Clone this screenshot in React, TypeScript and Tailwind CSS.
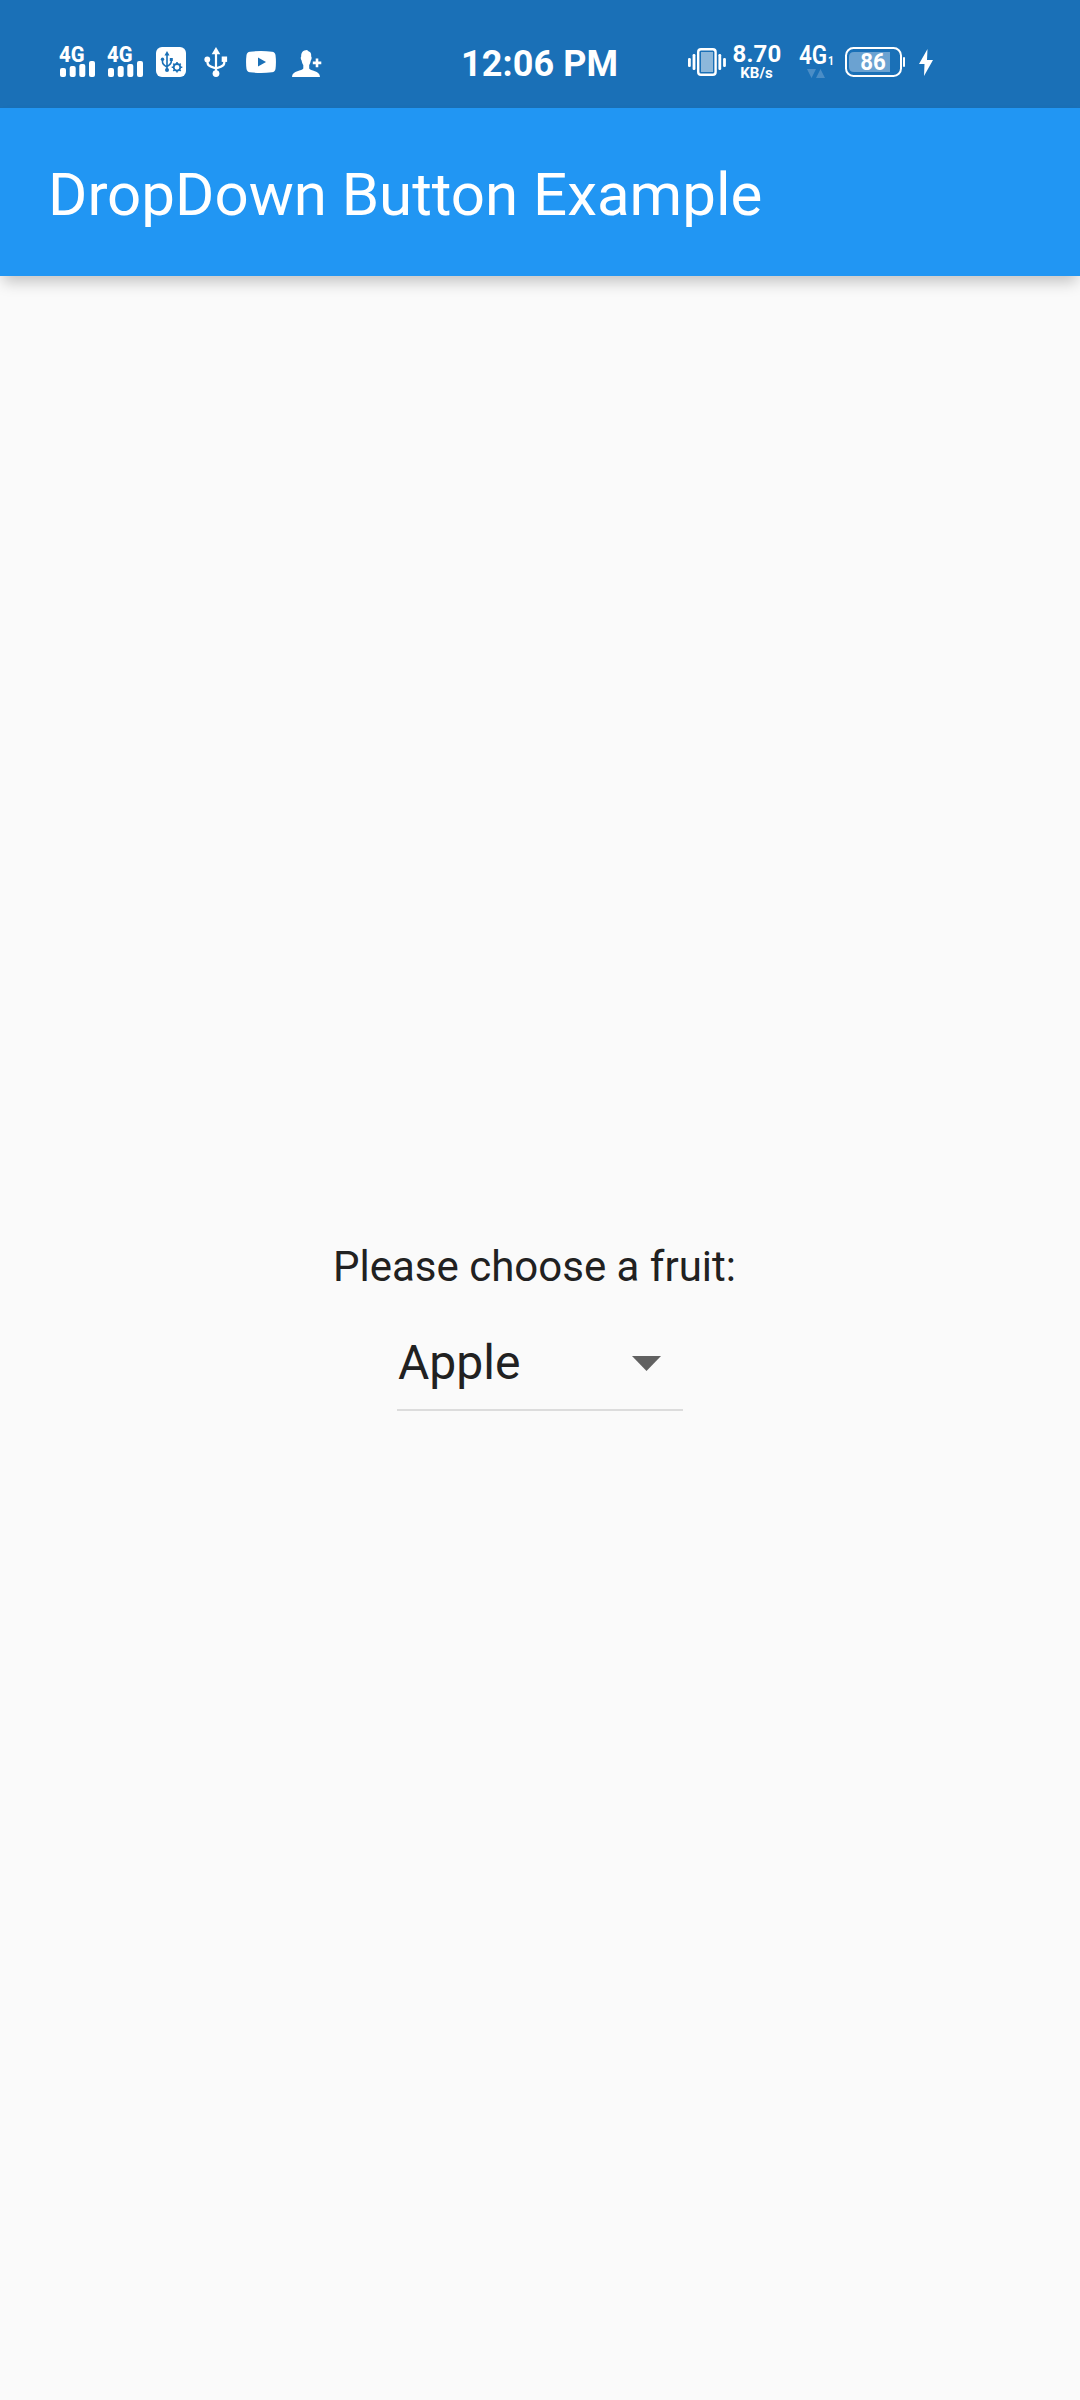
import React from "react";

function Signal() {
  return (
    <div className="relative h-[30px] w-[35px]">
      <span className="absolute -left-px top-0 h-[15px] origin-left scale-x-[0.92] text-[22px] leading-[15px] font-extrabold">
        4G
      </span>
      <svg className="block" width="35" height="30" viewBox="0 0 35 30" fill="currentColor">
        <rect x="0" y="21" width="6" height="9" rx="2" />
        <rect x="9.7" y="19" width="6" height="11" rx="2" />
        <rect x="19.3" y="17" width="6" height="13" rx="2" />
        <rect x="29" y="14" width="6" height="16" rx="2" />
      </svg>
    </div>
  );
}

function UsbDebug() {
  return (
    <svg width="30" height="30" viewBox="0 0 30 30">
      <rect width="30" height="30" rx="6" fill="#fff" />
      <g stroke="#1a70b7" strokeWidth="1.6" fill="none">
        <path d="M11 7V23M6.5 12V15Q6.5 17.5 11 20M15.3 12V14.5Q15.3 17 11 19.5" />
        <circle cx="21" cy="20.3" r="3.3" strokeWidth="1.8" />
        <path d="M21 15V17M21 23.6V25.6M15.7 20.3H17.7M24.3 20.3H26.3M17.3 16.6L18.7 18M23.3 22.6L24.7 24M24.7 16.6L23.3 18M18.7 22.6L17.3 24" />
      </g>
      <g fill="#1a70b7">
        <path d="M11 4L13.5 8.5H8.5Z" />
        <circle cx="6.5" cy="12.3" r="1.7" />
        <rect x="13.8" y="11" width="3" height="3" />
        <circle cx="11" cy="23" r="2" />
      </g>
    </svg>
  );
}

function Usb() {
  return (
    <svg width="24" height="30" viewBox="0 0 24 30" fill="#fff">
      <path d="M12 0L16.3 7.3H7.7Z" />
      <path d="M12 6V26M3.5 13V15.5Q3.5 18.5 7 19.6L12 21.5M20.3 12V15.5Q20.3 18.5 17 19.6L12 21.5" fill="none" stroke="#fff" strokeWidth="2.2" />
      <circle cx="3.3" cy="12.4" r="2.9" />
      <rect x="17.7" y="9.5" width="5.4" height="5.4" />
      <circle cx="12" cy="26.6" r="3.4" />
    </svg>
  );
}

function Video() {
  return (
    <svg className="mt-1" width="30" height="22" viewBox="0 0 30 22">
      <path d="M4 .7Q15-.6 26 .7Q29 1 29.5 4Q30.4 11 29.5 18Q29 21 26 21.3Q15 22.6 4 21.3Q1 21 .5 18Q-.4 11 .5 4Q1 1 4 .7Z" fill="#fff" />
      <path d="M12 6.6L20 11L12 15.4Z" fill="#1a70b7" />
    </svg>
  );
}

function AddPerson() {
  return (
    <svg className="mt-[3px]" width="30" height="27" viewBox="0 0 30 27" fill="#fff">
      <path d="M15 0C11 .2 9 2.5 9.2 6.5C8.4 7 8.7 9.5 9.6 10.5C10 12.5 10.6 14 11.3 15V18.5C10.5 21 0 20.5 0 27H28C28 20.5 18 21 17.2 18.5V15C17.9 14 18.4 12.5 18.8 10.5C19.7 9.5 20 7 19.2 6.5C19.4 3.5 18.6 1.6 16.8 1.4Z" />
      <path d="M23.7 8.5H26.3V11.6H29.3V14.2H26.3V17.3H23.7V14.2H20.8V11.6H23.7Z" />
    </svg>
  );
}

function Vibrate() {
  return (
    <svg className="mt-px" width="38" height="28" viewBox="0 0 38 28" fill="#fff">
      <rect x="0" y="10" width="2.8" height="9" rx="1.2" />
      <rect x="4.6" y="6" width="2.8" height="16" rx="1.2" />
      <rect x="30.4" y="6" width="2.8" height="16" rx="1.2" />
      <rect x="35.1" y="10" width="2.8" height="9" rx="1.2" />
      <rect x="10.2" y="1.2" width="17.4" height="25.5" rx="2.8" fill="none" stroke="#fff" strokeWidth="2.4" />
      <rect x="13" y="4" width="12" height="20" opacity=".5" />
    </svg>
  );
}

function Network() {
  return (
    <div className="relative h-[31px] w-[34px]">
      <div className="-ml-px flex h-[17px] items-end">
        <span className="w-[30px] origin-left scale-x-[0.9] text-[25px] leading-[17px] font-semibold">4G</span>
        <span className="-ml-px translate-y-px origin-left scale-x-[0.8] text-[13px] leading-[9px] font-bold">1</span>
      </div>
      <svg className="ml-[7px] mt-[5px] block" width="18" height="9" viewBox="0 0 18 9" fill="#4a8dc6">
        <path d="M0 0H9L4.5 9ZM9 9H18L13.5 0Z" />
      </svg>
    </div>
  );
}

function Battery() {
  return (
    <div className="relative h-[30px] w-[60px]">
      <svg className="block" width="60" height="30" viewBox="0 0 60 30">
        <path d="M9 5H45V25H9Q4 25 4 20V10Q4 5 9 5Z" fill="#6ba2d1" />
        <rect x="1" y="1" width="55" height="28" rx="7.5" fill="none" stroke="#fff" strokeWidth="2" />
        <rect x="58" y="10" width="2" height="10" rx="1" fill="#fff" />
      </svg>
      <span className="absolute inset-x-0 top-px w-[56px] scale-x-[0.97] text-center text-[23px] leading-[30px] font-bold">86</span>
    </div>
  );
}

function StatusBar() {
  return (
    <div className="flex h-[108px] items-start bg-[#1a70b7] pl-[60px] pt-[47px] text-white">
      <div className="flex w-[401px] items-start">
        <Signal />
        <div className="ml-[13px]"><Signal /></div>
        <div className="ml-[13px]"><UsbDebug /></div>
        <div className="ml-[18px]"><Usb /></div>
        <div className="ml-[18px]"><Video /></div>
        <div className="ml-4"><AddPerson /></div>
      </div>
      <div className="mt-1 w-[227px] text-[36px] leading-[26px] font-bold tracking-[0.1px] whitespace-nowrap">12:06 PM</div>
      <Vibrate />
      <div className="-mt-[3px] ml-[5px] flex w-[52px] flex-col items-center">
        <span className="text-[24px] leading-[20px] font-bold tracking-[0.2px]">8.70</span>
        <span className="mt-[2px] -ml-px text-[15px] leading-[15px] font-bold">KB/s</span>
      </div>
      <div className="ml-[17px]"><Network /></div>
      <div className="ml-[11px]"><Battery /></div>
      <svg className="ml-[14px] mt-[2px]" width="14" height="27" viewBox="0 0 14 27" fill="#fff">
        <path d="M8.5 0L0 15H5.5L5 27L14 11H8Z" />
      </svg>
    </div>
  );
}

export default function App() {
  return (
    <div className="flex h-[2400px] w-[1080px] flex-col overflow-hidden bg-[#fafafa] font-['Roboto',sans-serif]">
      <StatusBar />
      <header className="flex h-[168px] items-center bg-[#2196f3] pl-12 pt-[5px] shadow-[0_9px_14px_-3px_rgba(0,0,0,0.22)]">
        <h1 className="text-[60px] leading-[70px] font-normal text-white">DropDown Button Example</h1>
      </header>
      <main className="flex flex-1 flex-col items-center text-[#212121]">
        <p className="mt-[966px] -ml-[11px] text-[42px] leading-[50px] whitespace-nowrap">Please choose a fruit:</p>
        <button className="mt-[40px] flex h-[79px] w-[286px] items-start justify-between border-b-2 border-[#dcdcdc] pr-[22px] text-[48px] leading-[56px]">
          <span className="pt-[3px] pl-px">Apple</span>
          <svg className="mt-[24px]" width="29" height="15" viewBox="0 0 29 15">
            <path d="M0 0H29L14.5 15Z" fill="#616161" />
          </svg>
        </button>
      </main>
    </div>
  );
}
